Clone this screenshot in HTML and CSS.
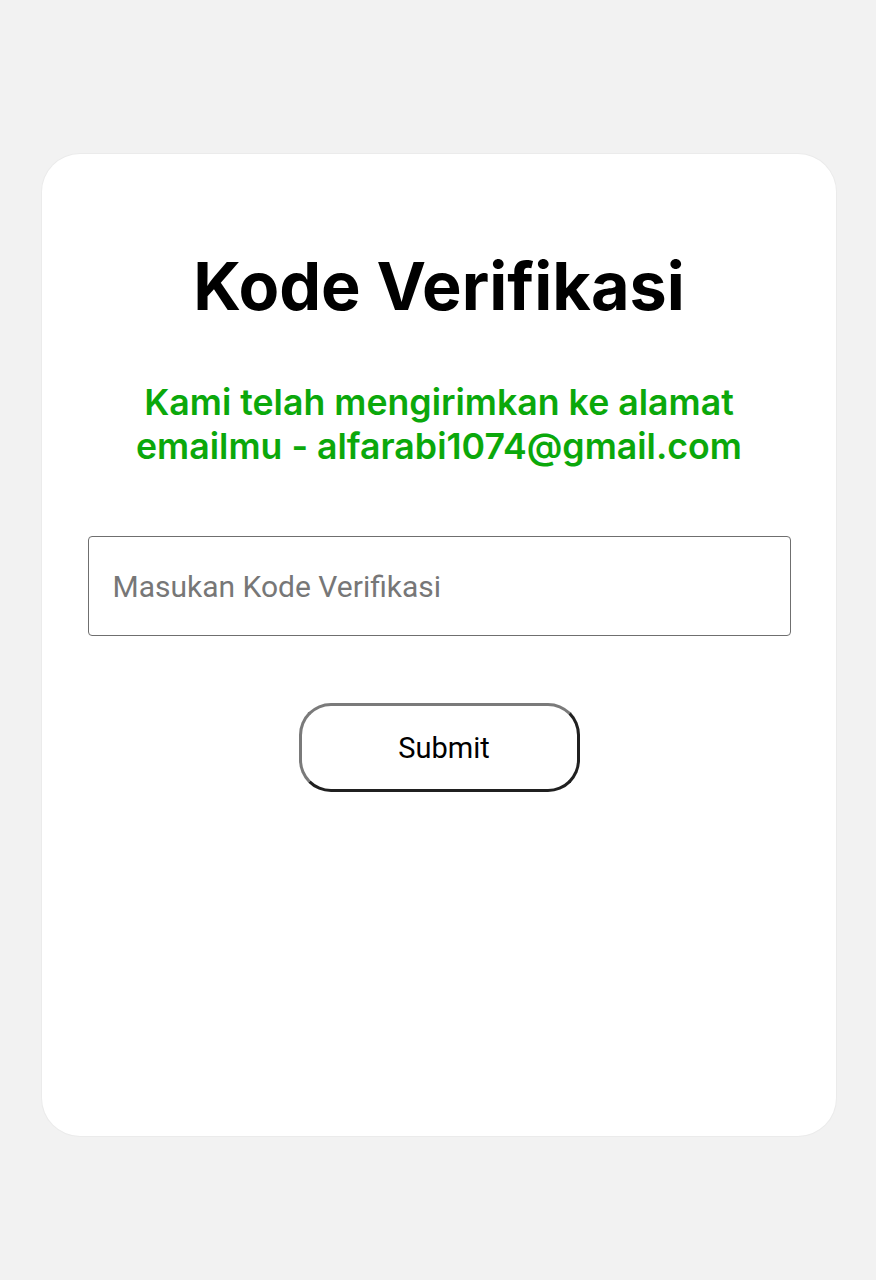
FILE: index.html
```html
<!DOCTYPE html>
<html lang="id">
<head>
<meta charset="utf-8">
<title>Kode Verifikasi</title>
<link rel="stylesheet" href="styles.css">
</head>
<body>
<main class="page">
  <section class="card">
    <h1 class="title">Kode Verifikasi</h1>
    <p class="info">Kami telah mengirimkan ke alamat<br>emailmu - alfarabi1074@gmail.com</p>
    <input class="code-input" type="text" placeholder="Masukan Kode Verifikasi">
    <button class="submit" type="button">Submit</button>
  </section>
</main>
</body>
</html>
```
FILE: styles.css
```css
* { box-sizing: border-box; }
html, body {
  margin: 0;
  padding: 0;
  background: #f2f2f2;
}
.page {
  width: 876px;
  height: 1280px;
  padding: 154px 40px 0 42px;
}
.card {
  width: 794px;
  height: 982px;
  background: #ffffff;
  border-radius: 38px;
  box-shadow: 0 0 0 1px #ebebeb;
  display: flex;
  flex-direction: column;
  align-items: center;
  padding-top: 92px;
}
.title {
  margin: 0;
  font-family: Inter, "Noto Sans", sans-serif;
  font-weight: 700;
  font-size: 66.5px;
  line-height: 80px;
  color: #000;
}
.info {
  margin: 54px 0 0;
  font-family: Inter, "Noto Sans", sans-serif;
  font-weight: 600;
  font-size: 35.7px;
  line-height: 44px;
  color: #0ba80b;
  text-align: center;
}
.code-input {
  margin-top: 68px;
  width: 703px;
  height: 100px;
  border: 1.5px solid #6f6f6f;
  border-radius: 4px;
  padding: 0 24px;
  font-family: Roboto, "Noto Sans", sans-serif;
  font-size: 30px;
  color: #222;
  background: #fff;
  outline: none;
}
.code-input::placeholder {
  color: #777777;
}
.submit {
  margin-top: 67px;
  width: 281px;
  height: 89px;
  border-radius: 32px;
  border: 3px solid;
  border-color: #7a7a7a #202020 #202020 #7a7a7a;
  background: #fff;
  font-family: Roboto, "Noto Sans", sans-serif;
  font-size: 29px;
  color: #000;
  padding: 0 0 0 10px;
}
```
